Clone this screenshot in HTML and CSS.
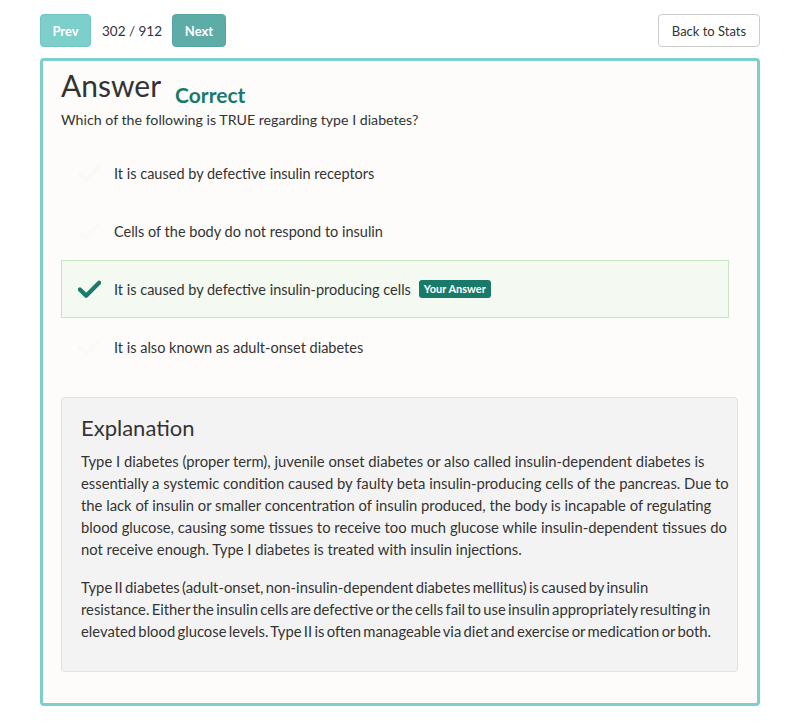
FILE: index.html
```html
<!DOCTYPE html>
<html>
<head>
<meta charset="utf-8">
<link rel="stylesheet" href="styles.css">
</head>
<body>
<div class="page">
  <div class="topbar">
    <div class="nav">
      <button class="btn btn-prev">Prev</button>
      <span class="counter">302 / 912</span>
      <button class="btn btn-next">Next</button>
    </div>
    <button class="btn-back">Back to Stats</button>
  </div>
  <div class="card">
    <div class="head">
      <h1 class="title">Answer</h1>
      <span class="status">Correct</span>
    </div>
    <p class="question">Which of the following is TRUE regarding type I diabetes?</p>
    <ul class="options">
      <li class="option">
        <svg class="check" viewBox="0 0 24 20"><path d="M2 10.5 L8.5 17 L22 3.5" fill="none" stroke-width="4.4" stroke-linecap="round" stroke-linejoin="round"/></svg>
        <span>It is caused by defective insulin receptors</span>
      </li>
      <li class="option">
        <svg class="check" viewBox="0 0 24 20"><path d="M2 10.5 L8.5 17 L22 3.5" fill="none" stroke-width="4.4" stroke-linecap="round" stroke-linejoin="round"/></svg>
        <span>Cells of the body do not respond to insulin</span>
      </li>
      <li class="option selected">
        <svg class="check" viewBox="0 0 24 20"><path d="M2 10.5 L8.5 17 L22 3.5" fill="none" stroke-width="4.4" stroke-linecap="round" stroke-linejoin="round"/></svg>
        <span>It is caused by defective insulin-producing cells</span>
        <span class="badge">Your Answer</span>
      </li>
      <li class="option">
        <svg class="check" viewBox="0 0 24 20"><path d="M2 10.5 L8.5 17 L22 3.5" fill="none" stroke-width="4.4" stroke-linecap="round" stroke-linejoin="round"/></svg>
        <span>It is also known as adult-onset diabetes</span>
      </li>
    </ul>
    <div class="explanation">
      <h2 class="exp-title">Explanation</h2>
      <p>Type I diabetes (proper term), juvenile onset diabetes or also called insulin-dependent diabetes is essentially a systemic condition caused by faulty beta insulin-producing cells of the pancreas. Due to the lack of insulin or smaller concentration of insulin produced, the body is incapable of regulating blood glucose, causing some tissues to receive too much glucose while insulin-dependent tissues do not receive enough. Type I diabetes is treated with insulin injections.</p>
      <p class="tight">Type II diabetes (adult-onset, non-insulin-dependent diabetes mellitus) is caused by insulin resistance. Either the insulin cells are defective or the cells fail to use insulin appropriately resulting in elevated blood glucose levels. Type II is often manageable via diet and exercise or medication or both.</p>
    </div>
  </div>
</div>
</body>
</html>
```
FILE: styles.css
```css
* { box-sizing: border-box; }
html, body { margin: 0; padding: 0; background: #fff; }
body {
  font-family: "Lato", "Liberation Sans", sans-serif;
  color: #333;
  font-size: 14px;
}
.page { padding: 14px 40px 0 40px; }
.topbar {
  display: flex;
  justify-content: space-between;
  align-items: center;
  height: 33px;
  margin-bottom: 11px;
}
.nav { display: flex; align-items: center; }
.btn {
  height: 33px;
  border: 1px solid transparent;
  border-radius: 4px;
  color: #fff;
  font-family: inherit;
  font-weight: 700;
  font-size: 13px;
  padding: 0;
}
.btn-prev { width: 51px; background: #7dcfcc; border-color: #70c4c1; }
.btn-next { width: 54px; background: #5eaca8; border-color: #58a4a0; }
.counter { margin: 0 10px 0 11px; font-size: 13.5px; color: #333; }
.btn-back {
  height: 33px;
  width: 102px;
  background: #fff;
  border: 1px solid #ccc;
  border-radius: 4px;
  font-family: inherit;
  font-size: 13px;
  color: #333;
  padding: 0;
}
.card {
  border: 3px solid #7dcfcc;
  border-radius: 4px;
  background: #fdfcfa;
  padding: 6px 19px 31px 18px;
}
.head { display: flex; align-items: flex-end; height: 36px; }
.title {
  margin: 0;
  font-size: 30px;
  font-weight: 400;
  line-height: 36px;
  color: #333;
}
.status {
  margin-left: 14px;
  font-size: 21px;
  font-weight: 700;
  color: #1a7a6a;
  line-height: 24px;
  margin-bottom: -4px;
}
.question { margin: 7px 0 14px; line-height: 20px; font-size: 14.2px; }
.options { list-style: none; margin: 0 9px 21px 0; padding: 0; }
.option {
  display: flex;
  align-items: center;
  height: 58px;
  border: 1px solid transparent;
  padding-left: 16px;
  font-size: 14.5px;
}
.check { width: 23px; height: 20px; margin-right: 13px; flex: none; }
.check path { stroke: #f9f9f6; }
.option.selected { background: #f4f9f2; border-color: #c9e3c3; }
.option.selected .check path { stroke: #1b7a6b; }
.badge {
  margin-left: 8px;
  background: #1a7a6a;
  color: #fff;
  font-size: 11px;
  font-weight: 700;
  border-radius: 3px;
  padding: 0 5px;
  height: 18px;
  line-height: 18px;
}
.explanation {
  background: #f3f3f3;
  border: 1px solid #e1e1e1;
  border-radius: 4px;
  padding: 16px 3px 17px 19px;
}
.exp-title {
  margin: 0 0 8px;
  font-size: 22px;
  font-weight: 400;
  line-height: 28px;
  color: #333;
}
.explanation p { margin: 0 0 16px; line-height: 22px; font-size: 14.8px; }
.explanation p.tight { word-spacing: -1.5px; margin-right: 19px; }
.explanation p:last-child { margin-bottom: 12px; }
```
